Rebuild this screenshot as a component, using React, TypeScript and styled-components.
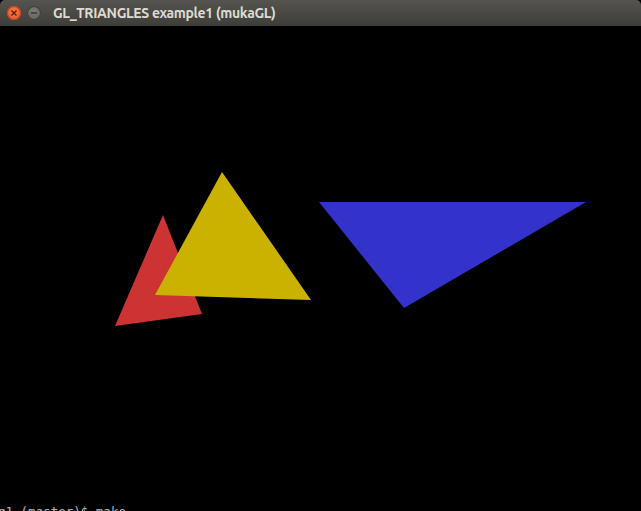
import styled, { createGlobalStyle } from 'styled-components';

const GlobalStyle = createGlobalStyle`
  html, body {
    margin: 0;
    padding: 0;
    background: #000;
  }
  body {
    font-family: "Ubuntu", "DejaVu Sans", "Liberation Sans", sans-serif;
  }
`;

const Window = styled.div`
  width: 641px;
  height: 511px;
  display: flex;
  flex-direction: column;
  background: #000;
  overflow: hidden;
`;

const TitleBar = styled.div`
  height: 26px;
  flex: none;
  display: flex;
  align-items: center;
  gap: 6px;
  padding-left: 7px;
  background: linear-gradient(#55544f, #3e3d39);
  border-radius: 5px 5px 0 0;
`;

const WinButton = styled.div<{ $tone: 'close' | 'min' }>`
  width: 14px;
  height: 14px;
  border-radius: 50%;
  display: flex;
  align-items: center;
  justify-content: center;
  background: ${(p) =>
    p.$tone === 'close'
      ? 'radial-gradient(circle at 50% 40%, #f37a4c, #e3531f)'
      : 'radial-gradient(circle at 50% 40%, #7d7c77, #5c5b57)'};
  box-shadow: inset 0 0 0 1px ${(p) => (p.$tone === 'close' ? '#b9451a' : '#3a3935')};
`;

const Title = styled.span`
  margin-left: 6px;
  color: #dfdbd2;
  font-size: 14px;
  font-weight: bold;
  letter-spacing: -0.35px;
  white-space: nowrap;
`;

const Canvas = styled.svg`
  flex: 1;
  display: block;
  width: 641px;
`;

// terminal behind the window, only the top of its line shows
const Terminal = styled.div`
  height: 6px;
  flex: none;
  overflow: hidden;
  color: #b8b8b8;
  font-family: "DejaVu Sans Mono", "Liberation Mono", monospace;
  font-size: 12.5px;
  line-height: 14px;
  white-space: pre;
  margin-left: -2px;
`;

const triangles = [
  { points: '163,215 115,326 202,314', fill: '#cc3333' },
  { points: '222,172 155,295 311,300', fill: '#ccb200' },
  { points: '319,202 586,202 404,308', fill: '#3333cc' },
];

export default function App() {
  return (
    <>
      <GlobalStyle />
      <Window>
        <TitleBar>
          <WinButton $tone="close">
            <svg width="8" height="8" viewBox="0 0 8 8">
              <path d="M1.5 1.5 L6.5 6.5 M6.5 1.5 L1.5 6.5" stroke="#5a1c08" strokeWidth="1.3" />
            </svg>
          </WinButton>
          <WinButton $tone="min">
            <svg width="8" height="8" viewBox="0 0 8 8">
              <path d="M1 4 H7" stroke="#35342f" strokeWidth="1.4" />
            </svg>
          </WinButton>
          <Title>GL_TRIANGLES example1 (mukaGL)</Title>
        </TitleBar>
        <Canvas viewBox="0 26 641 479" preserveAspectRatio="none">
          {triangles.map((t) => (
            <polygon key={t.fill} points={t.points} fill={t.fill} />
          ))}
        </Canvas>
        <Terminal>g1 (master)$ make</Terminal>
      </Window>
    </>
  );
}
